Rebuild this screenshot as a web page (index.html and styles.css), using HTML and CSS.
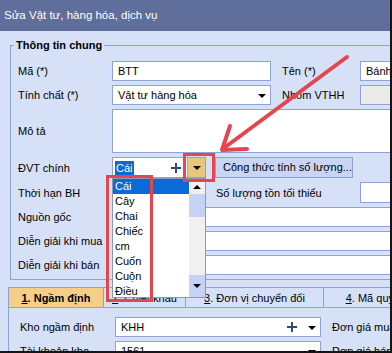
FILE: index.html
```html
<!DOCTYPE html>
<html lang="vi">
<head>
    <meta charset="UTF-8">
    <title>Sửa Vật tư, hàng hóa, dịch vụ</title>
    <link rel="stylesheet" href="styles.css">
</head>
<body>

<div class="window">
    <div class="titlebar">Sửa Vật tư, hàng hóa, dịch vụ</div>

    <div class="content">
        <fieldset class="group">
            <legend>Thông tin chung</legend>
            <div class="fields">
                <div class="row">
                    <span class="label">Mã (*)</span>
                    <div class="input w-main">BTT</div>
                    <span class="label label-side">Tên (*)</span>
                    <div class="input w-side">Bánh</div>
                </div>
                <div class="row">
                    <span class="label">Tính chất (*)</span>
                    <div class="input select w-main">Vật tư hàng hóa <span class="caret"></span></div>
                    <span class="label label-side">Nhóm VTHH</span>
                    <div class="input disabled w-side"></div>
                </div>
                <div class="row row-tall">
                    <span class="label">Mô tả</span>
                    <div class="input textarea"></div>
                </div>
                <div class="row row-21">
                    <span class="label">ĐVT chính</span>
                    <div class="input combo w-unit">
                        <span class="selected">Cái</span>
                        <svg class="plus" viewBox="0 0 10 10"><path d="M5 0v10M0 5h10"/></svg>
                        <span class="drop-btn"><span class="caret"></span></span>
                    </div>
                    <div class="formula-btn">Công thức tính số lượng...</div>
                </div>
                <div class="row row-21">
                    <span class="label">Thời hạn BH</span>
                    <div class="input w-unit"></div>
                    <span class="label label-min">Số lượng tồn tối thiểu</span>
                    <div class="input w-side"></div>
                </div>
                <div class="row">
                    <span class="label">Nguồn gốc</span>
                    <div class="input wide"></div>
                </div>
                <div class="row">
                    <span class="label">Diễn giải khi mua</span>
                    <div class="input wide"></div>
                </div>
                <div class="row">
                    <span class="label">Diễn giải khi bán</span>
                    <div class="input wide"></div>
                </div>
            </div>
        </fieldset>

        <div class="tabs">
            <div class="tab active w-tab1"><u>1</u>. Ngầm định</div>
            <div class="tab w-tab2"><u>2</u>. Chiết khấu</div>
            <div class="tab w-tab3"><u>3</u>. Đơn vị chuyển đổi</div>
            <div class="tab w-tab4"><u>4</u>. Mã quy cách</div>
        </div>

        <div class="tab-panel">
            <div class="row">
                <span class="label label-tab">Kho ngầm định</span>
                <div class="input select w-store">KHH
                    <svg class="plus" viewBox="0 0 10 10"><path d="M5 0v10M0 5h10"/></svg>
                    <span class="caret"></span>
                </div>
                <span class="label label-price">Đơn giá mua</span>
            </div>
            <div class="row">
                <span class="label label-tab">Tài khoản kho</span>
                <div class="input select w-store">1561 <span class="caret"></span></div>
                <span class="label label-price">Đơn giá bán</span>
            </div>
        </div>
    </div>

    <!-- open combo list -->
    <div class="dropdown-list">
        <ul class="items">
            <li class="current">Cái</li>
            <li>Cây</li>
            <li>Chai</li>
            <li>Chiếc</li>
            <li>cm</li>
            <li>Cuốn</li>
            <li>Cuộn</li>
            <li>Điều</li>
        </ul>
        <div class="scrollbar">
            <span class="scroll-up"><span class="caret caret-up"></span></span>
            <span class="scroll-thumb"></span>
            <span class="scroll-track"></span>
            <span class="scroll-down"><span class="caret"></span></span>
        </div>
    </div>

    <!-- red callouts -->
    <div class="mark mark-button"></div>
    <div class="mark mark-list"></div>
    <svg class="callout" viewBox="0 0 392 353">
        <path d="M347 57L224 148"/>
        <path d="M230 126L222 150L247 149"/>
    </svg>
</div>

</body>
</html>
```

FILE: styles.css
```css
/* Window */
body {
    margin: 0;
    font-family: "Liberation Sans", Arial, sans-serif;
    font-size: 11px;
    color: #000;
}

.window {
    position: relative;
    width: 392px;
    height: 353px;
    box-sizing: border-box;
    border-right: 2px solid #151515;
    border-bottom: 2px solid #151515;
    overflow: hidden;
    background-color: #d6e0f7;
}

.titlebar {
    height: 31px;
    line-height: 31px;
    padding-left: 4px;
    background-color: #5f6e9b;
    color: #fff;
    font-size: 11.5px;
}

.content {
    padding: 7px 0 0 10px;
}

/* Group box */
.group {
    margin: 0;
    width: 440px;
    padding: 0 0 4px 7px;
    border: 1px solid #8da2d8;
}

.group legend {
    margin-left: -4px;
    padding: 0 2px;
    font-weight: bold;
    line-height: 14px;
}

.fields {
    display: flex;
    flex-direction: column;
    gap: 4px;
    margin-top: 9px;
}

.row {
    display: flex;
    align-items: center;
    height: 20px;
}

.row-21 {
    height: 21px;
}

.row-tall {
    height: 44px;
}

.label {
    flex: none;
    width: 94px;
    white-space: nowrap;
}

.label-side {
    width: 78px;
    margin-left: 11px;
}

.label-min {
    width: 144px;
    margin-left: 10px;
}

/* Inputs */
.input {
    position: relative;
    flex: none;
    display: flex;
    align-items: center;
    box-sizing: border-box;
    height: 100%;
    padding: 0 5px;
    border: 1px solid #8da2d8;
    background-color: #fff;
    white-space: nowrap;
}

.w-main { width: 159px; }
.w-side { width: 110px; }
.w-unit { width: 94px; }
.wide { width: 300px; }
.textarea { width: 300px; }

.disabled {
    background-color: #ebebeb;
}

.caret {
    display: inline-block;
    width: 0;
    height: 0;
    border-left: 4px solid transparent;
    border-right: 4px solid transparent;
    border-top: 4px solid #000;
}

.caret-up {
    border-top: none;
    border-bottom: 4px solid #000;
}

.select .caret {
    position: absolute;
    right: 4px;
    top: 8px;
}

.plus {
    width: 10px;
    height: 10px;
    fill: none;
    stroke: #2b4a86;
    stroke-width: 2;
}

/* Unit combo */
.combo {
    padding: 0 0 0 2px;
}

.selected {
    padding: 0 1px;
    line-height: 14px;
    background-color: #0a6ad6;
    color: #fff;
}

.combo .plus {
    margin-left: auto;
    margin-right: 6px;
}

.drop-btn {
    display: flex;
    align-items: center;
    justify-content: center;
    width: 17px;
    height: 100%;
    background-color: #e6c87c;
    border-left: 1px solid #c9ad62;
}

.formula-btn {
    flex: none;
    box-sizing: border-box;
    width: 138px;
    height: 100%;
    margin-left: 9px;
    padding-left: 7px;
    line-height: 19px;
    border: 1px solid #8da2d8;
    background-color: #c9d5f4;
}

/* Tabs */
.tabs {
    display: flex;
    margin: 7px 0 0 -2px;
    height: 20px;
}

.tab {
    flex: none;
    display: flex;
    align-items: center;
    justify-content: center;
    box-sizing: border-box;
    border: 1px solid #8da2d8;
    border-bottom: none;
    margin-right: -1px;
    white-space: nowrap;
}

.tab.active {
    background-color: #f5cf88;
    font-weight: bold;
}

.w-tab1 { width: 96px; }
.w-tab2 { width: 83px; }
.w-tab3 { width: 139px; }
.w-tab4 { width: 120px; }

.tab-panel {
    display: flex;
    flex-direction: column;
    gap: 4px;
    margin-left: -2px;
    padding: 9px 0 0 11px;
    border-top: 1px solid #8da2d8;
    border-left: 1px solid #8da2d8;
}

.label-tab {
    width: 95px;
}

.w-store {
    width: 206px;
}

.w-store .plus {
    position: absolute;
    right: 23px;
    top: 4px;
}

.label-price {
    margin-left: 11px;
}

/* Dropdown list */
.dropdown-list {
    position: absolute;
    left: 112px;
    top: 178px;
    width: 94px;
    height: 120px;
    box-sizing: border-box;
    display: flex;
    border: 1px solid #8b98b8;
    background-color: #fff;
}

.items {
    flex: 1;
    margin: 0;
    padding: 0;
    list-style: none;
}

.items li {
    height: 15px;
    line-height: 15px;
    padding-left: 2px;
}

.items li.current {
    background-color: #0a6ad6;
    color: #fff;
}

.scrollbar {
    display: flex;
    flex-direction: column;
    width: 16px;
    background-color: #f0f0f0;
}

.scroll-up,
.scroll-down {
    display: flex;
    align-items: center;
    justify-content: center;
    height: 15px;
}

.scroll-thumb {
    height: 23px;
    background-color: #c6d2f3;
}

.scroll-track {
    flex: 1;
}

.scroll-down {
    height: 22px;
    background-color: #c6d2f3;
}

/* Red highlights */
.mark {
    position: absolute;
    box-sizing: border-box;
    border: 3px solid #e5454c;
}

.mark-button {
    left: 183px;
    top: 153px;
    width: 32px;
    height: 29px;
}

.mark-list {
    left: 106px;
    top: 175px;
    width: 47px;
    height: 127px;
}

.callout {
    position: absolute;
    left: 0;
    top: 0;
    width: 392px;
    height: 353px;
    fill: none;
    stroke: #e5454c;
    stroke-width: 4;
    stroke-linecap: round;
    stroke-linejoin: round;
}
```
